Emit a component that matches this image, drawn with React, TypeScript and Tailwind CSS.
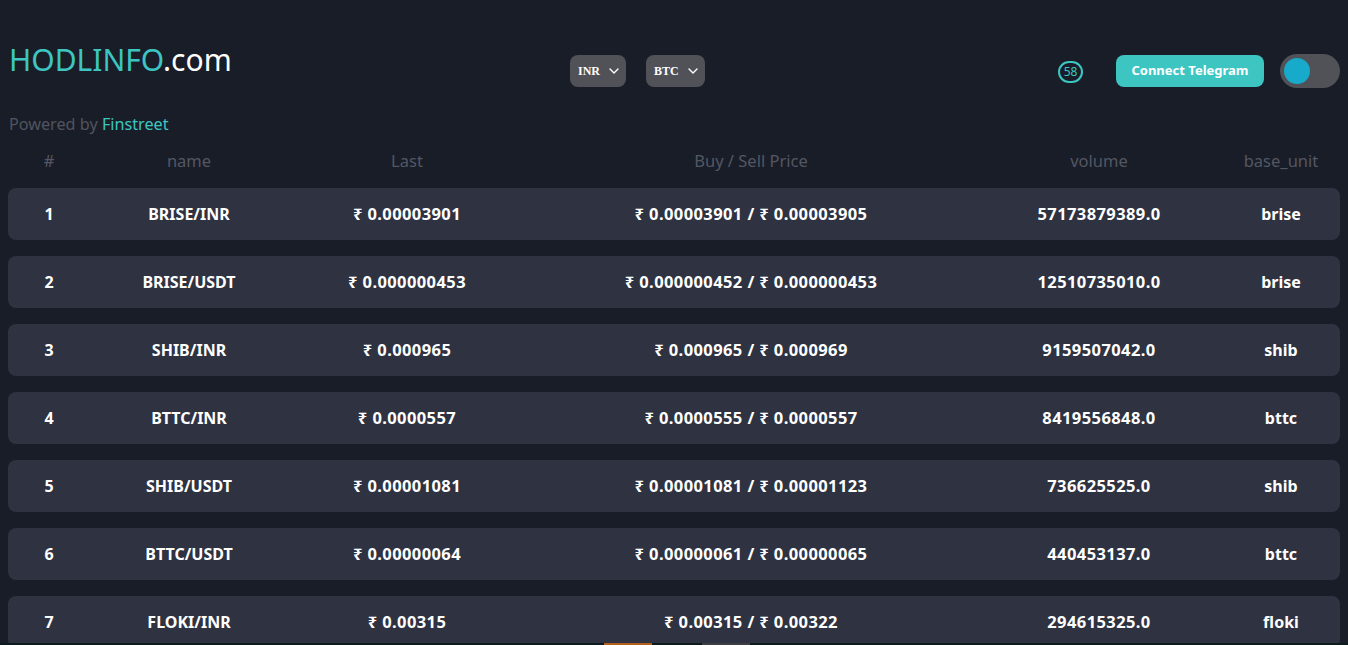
import { useState } from "react";

type Ticker = {
  name: string;
  last: string;
  buy: string;
  sell: string;
  volume: string;
  base: string;
};

const tickers: Ticker[] = [
  { name: "BRISE/INR", last: "0.00003901", buy: "0.00003901", sell: "0.00003905", volume: "57173879389.0", base: "brise" },
  { name: "BRISE/USDT", last: "0.000000453", buy: "0.000000452", sell: "0.000000453", volume: "12510735010.0", base: "brise" },
  { name: "SHIB/INR", last: "0.000965", buy: "0.000965", sell: "0.000969", volume: "9159507042.0", base: "shib" },
  { name: "BTTC/INR", last: "0.0000557", buy: "0.0000555", sell: "0.0000557", volume: "8419556848.0", base: "bttc" },
  { name: "SHIB/USDT", last: "0.00001081", buy: "0.00001081", sell: "0.00001123", volume: "736625525.0", base: "shib" },
  { name: "BTTC/USDT", last: "0.00000064", buy: "0.00000061", sell: "0.00000065", volume: "440453137.0", base: "bttc" },
  { name: "FLOKI/INR", last: "0.00315", buy: "0.00315", sell: "0.00322", volume: "294615325.0", base: "floki" },
];

const cols = "grid grid-cols-[82px_198px_238px_450px_246px_118px] items-center text-center";
const num = "text-[16.5px] tracking-[0.4px]";

function Select({ label }: { label: string }) {
  return (
    <div className="flex h-8 items-center gap-[9px] rounded-lg bg-[#505258] pl-[8px] pr-[7px] text-white">
      <span className="font-['Liberation_Serif',serif] text-[12px] font-bold">{label}</span>
      <svg width="10" height="6" viewBox="0 0 10 6" fill="none">
        <path d="M1 1l4 4 4-4" stroke="white" strokeWidth="1.4" strokeLinecap="round" strokeLinejoin="round" />
      </svg>
    </div>
  );
}

export default function App() {
  const [dark, setDark] = useState(true);

  return (
    <div className="min-h-screen bg-[#191d28] px-2 font-['Noto_Sans',sans-serif]">
      <div className="flex items-start pt-[42px]">
        <div className="w-[562px] pl-px">
          <div className="h-9 text-[30px] leading-9">
            <span className="text-[#3dc6c1]">HODLINFO</span>
            <span className="text-white">.com</span>
          </div>
          <div className="mt-[34px] text-[16.2px] leading-6 text-[#50545f]">
            Powered by <span className="text-[#3dc6c1]">Finstreet</span>
          </div>
        </div>

        <div className="mt-[13px] flex gap-5">
          <Select label="INR" />
          <Select label="BTC" />
        </div>

        <div className="flex-1" />

        <div className="flex items-start">
          <div className="mt-[19px] flex h-[22px] w-[25px] items-center justify-center rounded-full border-2 border-[#3dc6c1] text-[12px] leading-none text-[#3dc6c1]">
            58
          </div>
          <button
            type="button"
            className="ml-[33px] mt-[13px] h-8 w-[148px] rounded-lg bg-[#3dc6c1] text-[13px] font-bold text-white"
          >
            Connect Telegram
          </button>
          <button
            type="button"
            onClick={() => setDark(!dark)}
            className="ml-4 mt-3 flex h-[34px] w-[60px] items-center rounded-full bg-[#505258] px-1"
          >
            <span
              className={
                dark
                  ? "h-[26px] w-[26px] rounded-full bg-[#17aacb]"
                  : "ml-[26px] h-[26px] w-[26px] rounded-full bg-[#17aacb]"
              }
            />
          </button>
        </div>
      </div>

      <div className={`${cols} mt-[13px] text-[16.5px] leading-6 text-[#535763]`}>
        <div>#</div>
        <div>name</div>
        <div>Last</div>
        <div>Buy / Sell Price</div>
        <div>volume</div>
        <div>base_unit</div>
      </div>

      <div className="mt-[15px] flex flex-col gap-4">
        {tickers.map((t, i) => (
          <div key={t.name} className={`${cols} h-[52px] rounded-lg bg-[#2e3241] text-[16px] font-bold text-white`}>
            <div>{i + 1}</div>
            <div>{t.name}</div>
            <div className={num}>₹ {t.last}</div>
            <div className={num}>
              ₹ {t.buy} / ₹ {t.sell}
            </div>
            <div className={num}>{t.volume}</div>
            <div>{t.base}</div>
          </div>
        ))}
      </div>

      <div className="fixed bottom-0 left-0 right-0 flex h-[2px] bg-[#0d1a1e]">
        <div className="ml-[604px] w-12 bg-[#b35f1d]" />
        <div className="ml-[50px] w-12 bg-[#3e3e44]" />
      </div>
    </div>
  );
}
